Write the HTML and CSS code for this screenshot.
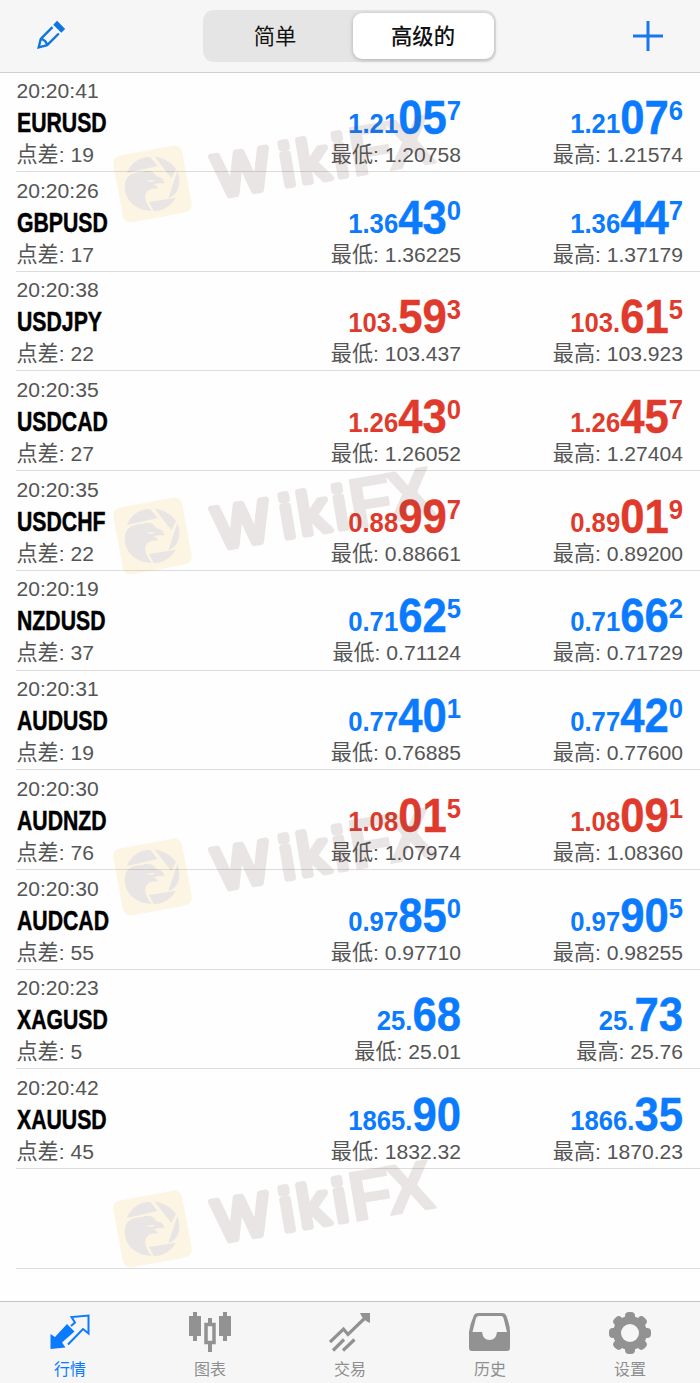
FILE: index.html
```html
<!DOCTYPE html>
<html lang="zh-CN">
<head>
  <meta charset="UTF-8">
  <meta name="viewport" content="width=device-width, initial-scale=1.0">
  <title>行情</title>
  <link rel="stylesheet" href="styles.css">
</head>
<body>

  <!-- Shared watermark -->
  <svg class="defs" width="0" height="0">
    <defs>
      <g id="watermark">
        <rect x="-35" y="-34" width="70" height="68" rx="8" fill="#f5c547" transform="translate(44.5 89) rotate(-10.5)"/>
        <g fill="#70524c" transform="translate(0 44) scale(.33333)">
          <path d="M57 102 C66 74 94 52 127 54 L149 81 Z"/>
          <path d="M141 54 C166 55 189 70 204 90 L190 118 Z"/>
          <path d="M208 97 C216 116 217 142 204 162 C197 170 190 174 181 177 Z"/>
          <path d="M123 189 L203 176 C192 197 172 210 152 215 L137 216 Z"/>
          <path d="M52 128 C57 109 76 100 103 99 C112 93 127 94 137 101 C143 108 145 112 154 114 C164 117 169 124 168 134 C158 129 145 134 138 137 C146 142 153 144 148 149 C126 145 112 157 112 173 C112 191 123 205 132 216 C109 216 84 207 68 190 C54 174 47 151 52 128 Z"/>
        </g>
        <path d="M38 85.500L47 85Q44 88.500 38 85.500Z" fill="#f5c547"/>
        <g class="wm-text" transform="translate(122 103) rotate(-9.5)">
          <text class="wm-wiki" x="-12 55 73 109" y="-3">Wiki</text>
          <text class="wm-fx" x="125 163" y="-1">FX</text>
        </g>
      </g>
    </defs>
  </svg>

  <header class="navbar">
    <svg class="edit" width="32" height="32" viewBox="0 0 32 32">
      <g transform="translate(-1 0) rotate(45 16 16)" fill="none" stroke="#0f75e0" stroke-width="2.4">
        <path d="M11.500 8V24.500L16 32L20.500 24.500V8M11.500 24.500Q16 21.500 20.500 24.500"/>
        <path d="M11.500 1.500H20.500V4.500H11.500Z" fill="#0f75e0"/>
      </g>
    </svg>
    <div class="segmented">
      <div class="segment">简单</div>
      <div class="segment active">高级的</div>
    </div>
    <svg class="add" width="30" height="30" viewBox="0 0 30 30">
      <path d="M15 0V30M0 15H30" stroke="#1877ee" stroke-width="3"/>
    </svg>
  </header>

  <main class="quotes" id="quotes"></main>

  <svg class="watermark wm-1" width="350" height="150"><use href="#watermark"/></svg>
  <svg class="watermark wm-2" width="350" height="150"><use href="#watermark"/></svg>
  <svg class="watermark wm-3" width="350" height="150"><use href="#watermark"/></svg>
  <svg class="watermark wm-4" width="350" height="150"><use href="#watermark"/></svg>

  <nav class="tabbar">
    <div class="tab active">
      <svg width="42" height="42" viewBox="0 0 42 42">
        <path d="M1.500 22L6 25L18 12L25.500 19.500L13 30.500L16.500 35.500L1.500 37Z" fill="#0a7aff"/>
        <path d="M22 14L26 10.500L22.500 5L39.500 3.500V21.500L34 17L19 32.500" fill="none" stroke="#0a7aff" stroke-width="2"/>
      </svg>
      <span>行情</span>
    </div>
    <div class="tab">
      <svg width="42" height="42" viewBox="0 0 42 42">
        <path d="M4 0h4v4h4v20H8v5H4v-5H0V4h4zM34 0h4v4h4v20h-4v5h-4v-5h-4V4h4z" fill="#929292"/>
        <path d="M21 6v6M21 31v9" stroke="#929292" stroke-width="4"/>
        <path d="M17 12.500h8v18h-8z" fill="none" stroke="#929292" stroke-width="3.5"/>
      </svg>
      <span>图表</span>
    </div>
    <div class="tab">
      <svg width="42" height="42" viewBox="0 0 42 42">
        <path d="M1 30L14.500 17L19 22.500L37 5M4 38.500L15 27.500M14 38.500L25.500 27.500" fill="none" stroke="#929292" stroke-width="3.2"/>
        <path d="M31 1H41V11L37 9L33 5Z" fill="#929292"/>
      </svg>
      <span>交易</span>
    </div>
    <div class="tab">
      <svg width="42" height="42" viewBox="0 0 42 42">
        <path fill-rule="evenodd" d="M9 1H33Q36 1 37 3Q41 13 41 20V36Q41 39 38 39H3Q0 39 0 36V20Q1 12 5 3Q6 1 9 1ZM10 4Q8 4 7 6L3.500 20H13Q14 28 20.500 28Q27 28 28 20H38L34.500 6Q34 4 32 4Z" fill="#929292"/>
      </svg>
      <span>历史</span>
    </div>
    <div class="tab">
      <svg width="42" height="42" viewBox="0 0 42 42">
        <g fill="#929292">
          <rect x="16" y="0" width="10" height="42" rx="4"/>
          <rect x="16" y="0" width="10" height="42" rx="4" transform="rotate(45 21 21)"/>
          <rect x="16" y="0" width="10" height="42" rx="4" transform="rotate(90 21 21)"/>
          <rect x="16" y="0" width="10" height="42" rx="4" transform="rotate(135 21 21)"/>
          <circle cx="21" cy="21" r="17"/>
        </g>
        <circle cx="21" cy="21" r="9" fill="#f6f6f6"/>
      </svg>
      <span>设置</span>
    </div>
  </nav>

  <script>
    // time, symbol, spread, direction, bid parts, low, ask parts, high
    const quotes = [
      ['20:20:41', 'EURUSD', 19, 'up', ['1.21', '05', '7'], '1.20758', ['1.21', '07', '6'], '1.21574'],
      ['20:20:26', 'GBPUSD', 17, 'up', ['1.36', '43', '0'], '1.36225', ['1.36', '44', '7'], '1.37179'],
      ['20:20:38', 'USDJPY', 22, 'down', ['103.', '59', '3'], '103.437', ['103.', '61', '5'], '103.923'],
      ['20:20:35', 'USDCAD', 27, 'down', ['1.26', '43', '0'], '1.26052', ['1.26', '45', '7'], '1.27404'],
      ['20:20:35', 'USDCHF', 22, 'down', ['0.88', '99', '7'], '0.88661', ['0.89', '01', '9'], '0.89200'],
      ['20:20:19', 'NZDUSD', 37, 'up', ['0.71', '62', '5'], '0.71124', ['0.71', '66', '2'], '0.71729'],
      ['20:20:31', 'AUDUSD', 19, 'up', ['0.77', '40', '1'], '0.76885', ['0.77', '42', '0'], '0.77600'],
      ['20:20:30', 'AUDNZD', 76, 'down', ['1.08', '01', '5'], '1.07974', ['1.08', '09', '1'], '1.08360'],
      ['20:20:30', 'AUDCAD', 55, 'up', ['0.97', '85', '0'], '0.97710', ['0.97', '90', '5'], '0.98255'],
      ['20:20:23', 'XAGUSD', 5, 'up', ['25.', '68', ''], '25.01', ['25.', '73', ''], '25.76'],
      ['20:20:42', 'XAUUSD', 45, 'up', ['1865.', '90', ''], '1832.32', ['1866.', '35', ''], '1870.23']
    ];

    function price(parts) {
      return `<div class="price"><span>${parts[0]}</span><b>${parts[1]}</b><sup>${parts[2]}</sup></div>`;
    }

    const list = document.getElementById('quotes');
    quotes.forEach(([time, symbol, spread, dir, bid, low, ask, high]) => {
      const row = document.createElement('div');
      row.className = 'row ' + dir;
      row.innerHTML = `
        <div class="info">
          <div class="line">${time}</div>
          <div class="symbol">${symbol}</div>
          <div class="line">点差: ${spread}</div>
        </div>
        <div class="quote">${price(bid)}<div class="line">最低: ${low}</div></div>
        <div class="quote">${price(ask)}<div class="line">最高: ${high}</div></div>`;
      list.appendChild(row);
    });

    // Empty row at the end of the list
    const empty = document.createElement('div');
    empty.className = 'row';
    list.appendChild(empty);
  </script>
</body>
</html>
```
FILE: styles.css
```css
* {
  box-sizing: border-box;
}
body {
  margin: 0;
  height: 1383px;
  position: relative;
  display: flex;
  flex-direction: column;
  font-family: "Liberation Sans", "Noto Sans CJK SC", sans-serif;
  background-color: #fefefe;
  overflow: hidden;
}
.defs {
  position: absolute;
}
.navbar {
  height: 73px;
  flex: none;
  display: flex;
  align-items: center;
  justify-content: space-between;
  padding: 0 37px 0 35px;
  background-color: #f6f6f6;
  border-bottom: 1px solid #cfcfcf;
}
.segmented {
  display: flex;
  width: 293px;
  height: 52px;
  margin-right: 2px;
  padding: 3px 2px 3px 0;
  border-radius: 11px;
  background-color: #e5e5e5;
}
.segment {
  flex: 1;
  padding-right: 5px;
  text-align: center;
  font-size: 21.300px;
  line-height: 48px;
  color: #111;
}
.segment.active {
  flex: none;
  width: 141px;
  padding-right: 0;
  border-radius: 9px;
  font-weight: 500;
  background-color: #fff;
  box-shadow: 0 1px 4px rgba(0, 0, 0, 0.25);
}
.quotes {
  flex: 1;
  margin-top: -0.600px;
  padding-left: 16px;
}
.row {
  display: grid;
  grid-template-columns: 1fr 222px 222px;
  height: 99.700px;
  padding: 2.600px 17px 0 0;
  border-bottom: 1px solid #dcdcdc;
}
.info {
  padding-left: 0.500px;
}
.line {
  font-size: 21.100px;
  line-height: 32px;
  height: 32px;
  color: #555;
  white-space: nowrap;
}
.symbol {
  height: 32px;
  font-size: 28.500px;
  font-weight: bold;
  line-height: 30px;
  color: #000;
  -webkit-text-stroke: 0.5px #000;
  transform: scaleX(0.745);
  transform-origin: left;
}
.quote {
  text-align: right;
}
.price {
  height: 64px;
  padding-top: 20px;
  font-size: 28.500px;
  font-weight: bold;
  line-height: 44px;
  white-space: nowrap;
  transform: scaleX(0.9);
  transform-origin: right;
}
.price span {
  line-height: 0;
  vertical-align: 1px;
}
.price b {
  font-size: 48.500px;
  -webkit-text-stroke: 0.4px;
}
.price sup {
  font-size: 28.500px;
  line-height: 0;
  vertical-align: 14.500px;
}
.up .price {
  color: #0a7aff;
}
.down .price {
  color: #e03a2c;
}
.watermark {
  position: absolute;
  left: 108px;
  opacity: 0.14;
}
.wm-1 {
  top: 95px;
}
.wm-2 {
  top: 447px;
}
.wm-3 {
  top: 788px;
}
.wm-4 {
  top: 1140px;
}
.wm-text {
  fill: #70524c;
  stroke: #70524c;
  stroke-linejoin: round;
}
.wm-wiki {
  font-size: 59px;
  stroke-width: 6.500px;
}
.wm-fx {
  font-size: 70px;
  font-weight: bold;
  stroke-width: 2px;
}
.tabbar {
  height: 82px;
  flex: none;
  display: flex;
  background-color: #f6f6f6;
  border-top: 1px solid #c4c4c4;
}
.tab {
  flex: 1;
  display: flex;
  flex-direction: column;
  align-items: center;
  padding-top: 10px;
  font-size: 16px;
  line-height: 24px;
  color: #8e8e8e;
}
.tab span {
  margin-top: 4px;
}
.tab.active {
  color: #0a7aff;
}
```
